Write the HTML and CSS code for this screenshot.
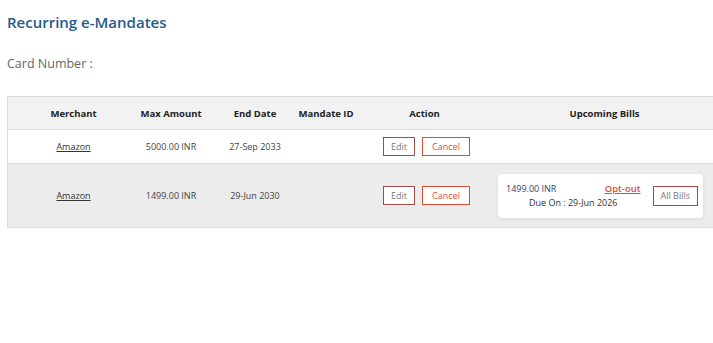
FILE: index.html
```html
<!DOCTYPE html>
<html lang="en">
<head>
    <meta charset="UTF-8">
    <meta name="viewport" content="width=device-width, initial-scale=1.0">
    <title>Recurring e-Mandates</title>
    <link rel="stylesheet" href="styles.css">
</head>
<body>
    <h1 class="title">Recurring e-Mandates</h1>
    <div class="card-number">Card Number :</div>

    <!-- Mandates table -->
    <div class="table-wrap">
        <div class="mandates">
            <div class="row head">
                <div class="cell">Merchant</div>
                <div class="cell">Max Amount</div>
                <div class="cell">End Date</div>
                <div class="cell">Mandate ID</div>
                <div class="cell">Action</div>
                <div class="cell">Upcoming Bills</div>
                <div class="cell"></div>
            </div>
            <div class="row">
                <div class="cell"><a href="#" class="merchant">Amazon</a></div>
                <div class="cell">5000.00 INR</div>
                <div class="cell">27-Sep 2033</div>
                <div class="cell"></div>
                <div class="cell actions">
                    <button class="btn btn-edit">Edit</button>
                    <button class="btn btn-cancel">Cancel</button>
                </div>
                <div class="cell"></div>
                <div class="cell"></div>
            </div>
            <div class="row alt tall">
                <div class="cell"><a href="#" class="merchant">Amazon</a></div>
                <div class="cell">1499.00 INR</div>
                <div class="cell">29-Jun 2030</div>
                <div class="cell"></div>
                <div class="cell actions">
                    <button class="btn btn-edit">Edit</button>
                    <button class="btn btn-cancel">Cancel</button>
                </div>
                <div class="cell">
                    <!-- Next bill card -->
                    <div class="bill">
                        <div class="bill-info">
                            <div class="bill-top">
                                <span class="bill-amount">1499.00 INR</span>
                                <a href="#" class="opt-out">Opt-out</a>
                            </div>
                            <div class="bill-due">Due On : 29-Jun 2026</div>
                        </div>
                        <button class="btn btn-edit">All Bills</button>
                    </div>
                </div>
                <div class="cell"></div>
            </div>
        </div>
    </div>
</body>
</html>
```

FILE: styles.css
```css
body {
    font-family: "Open Sans", "Noto Sans", Arial, sans-serif;
    background-color: #fff;
    margin: 0;
    padding: 0 0 0 7px;
    color: #333;
}
.title {
    margin: 12px 0 0 0;
    font-size: 15px;
    font-weight: 600;
    color: #1f5b8d;
    line-height: 20px;
}
.card-number {
    margin-top: 23px;
    font-size: 12.5px;
    color: #666;
    line-height: 18px;
}
.table-wrap {
    margin-top: 23px;
    overflow: hidden;
}
.mandates {
    width: 760px;
    border-left: 1px solid #dcdcdc;
    border-top: 1px solid #dcdcdc;
}
.row {
    display: grid;
    grid-template-columns: 131px 64px 104px 38px 159px 201px 62px;
    height: 33px;
    border-bottom: 1px solid #dcdcdc;
    font-size: 9px;
    color: #444;
}
.row.head {
    height: 32px;
    background-color: #f2f2f2;
    font-weight: 700;
    font-size: 9.5px;
    color: #222;
}
.row.alt {
    background-color: #ececec;
}
.row.tall {
    height: 63px;
}
.cell {
    display: flex;
    align-items: center;
    justify-content: center;
    white-space: nowrap;
}
.merchant {
    color: #333;
    text-decoration: underline;
}
.actions {
    gap: 7px;
    padding-left: 4px;
}
.btn {
    font-family: inherit;
    font-size: 9px;
    height: 19px;
    padding: 0 7px;
    background-color: #fff;
    border: 1px solid;
    cursor: pointer;
}
.btn-edit {
    border-color: #a34b4b;
    color: #777;
}
.btn-cancel {
    border-color: #e04b33;
    color: #e04b33;
    padding: 0 9px;
}
/* Upcoming bill card */
.bill {
    display: flex;
    align-items: center;
    flex-shrink: 0;
    width: 205px;
    height: 44px;
    margin-right: 8px;
    padding: 0 5px 0 8px;
    box-sizing: border-box;
    background-color: #fff;
    border-radius: 4px;
    box-shadow: 0 1px 4px rgba(0, 0, 0, 0.08);
}
.bill-info {
    flex: 1;
    margin-right: 12px;
}
.bill-top {
    display: flex;
    justify-content: space-between;
    align-items: center;
}
.bill-amount {
    color: #2f3f70;
    font-size: 9px;
}
.opt-out {
    color: #e04b33;
    font-weight: 600;
    font-size: 9.5px;
}
.bill-due {
    text-align: center;
    font-size: 9px;
    color: #333;
    margin-top: 1px;
}
.bill .btn {
    height: 20px;
    padding: 0 7px;
}
```
